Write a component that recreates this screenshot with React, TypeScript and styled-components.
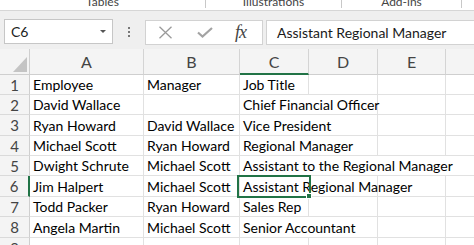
import styled, { createGlobalStyle } from "styled-components";

const GlobalStyle = createGlobalStyle`
    body {
        margin: 0;
        background: #ffffff;
        overflow: hidden;
    }
`

const green = "#217346";
const cellFont = `"Lato", "Liberation Sans", sans-serif`;

const Page = styled.div`
    width: 474px;
    height: 245px;
    overflow: hidden;
    display: flex;
    flex-direction: column;
    font-family: ${cellFont};
`

const Ribbon = styled.div`
    flex-shrink: 0;
    height: 10px;
    display: flex;
    border-bottom: 1px solid #d6d6d6;
    overflow: hidden;
    background: #ffffff;
`

const RibbonGroup = styled.div<{ $width: number }>`
    flex: 0 0 ${p => p.$width}px;
    height: 8px;
    box-sizing: border-box;
    border-right: 1px solid #c8c8c8;
    text-align: center;
    font-size: 12px;
    line-height: 12px;
    color: #444444;
    white-space: nowrap;
    overflow: hidden;

    span {
        display: block;
        margin-top: -4px;
    }
`

const FormulaBar = styled.div`
    flex-shrink: 0;
    height: 38px;
    display: flex;
    align-items: flex-start;
    padding: 8px 0 0 4px;
    box-sizing: border-box;
    background: #efefef;
`

const NameBox = styled.div`
    width: 109px;
    height: 25px;
    box-sizing: border-box;
    border: 1px solid #c6c6c6;
    background: #ffffff;
    display: flex;
    align-items: center;
    justify-content: space-between;
    padding: 0 6px;
    font-size: 14px;
    color: #222222;
`

const DropArrow = styled.div`
    width: 0;
    height: 0;
    border-left: 3px solid transparent;
    border-right: 3px solid transparent;
    border-top: 3px solid #555555;
`

const Grip = styled.div`
    width: 32px;
    height: 25px;
    display: flex;
    flex-direction: column;
    align-items: center;
    justify-content: center;
    gap: 2px;

    i {
        width: 2px;
        height: 2px;
        background: #777777;
    }
`

const FxBox = styled.div`
    width: 118px;
    height: 25px;
    margin-top: 1px;
    box-sizing: border-box;
    border: 1px solid #d2d2d2;
    background: #ffffff;
    display: flex;
    align-items: center;
    padding-left: 12px;
`

const IconSlot = styled.div<{ $width: number }>`
    flex: 0 0 ${p => p.$width}px;
    display: flex;
    align-items: center;
`

const Fx = styled.span`
    font-family: "Liberation Serif", serif;
    font-style: italic;
    font-size: 18px;
    color: #444444;
    letter-spacing: -1px;
`

const FormulaInput = styled.div`
    flex: 1;
    height: 25px;
    margin: 1px 0 0 3px;
    box-sizing: border-box;
    border: 1px solid #d2d2d2;
    border-right: none;
    background: #ffffff;
    display: flex;
    align-items: center;
    padding-left: 10px;
    font-size: 14px;
    color: #1a1a1a;
    white-space: nowrap;
`

const Sheet = styled.div`
    flex: 1;
    min-height: 0;
    display: grid;
    grid-template-columns: 30px 114px 96px 69px 69px 68px 69px;
    grid-template-rows: 26px 20px 20px 21px 20px 20px 21px 20px 21px 20px;
    background: #ffffff;
`

const Corner = styled.div`
    background: #f4f4f4;
    border-right: 1px solid #cfcfcf;
    border-bottom: 1px solid #cfcfcf;
    display: flex;
    align-items: flex-end;
    justify-content: flex-end;
    padding: 0 2px 2px 0;
`

const ColHeader = styled.div<{ $active?: boolean }>`
    background: #f4f4f4;
    border-right: 1px solid #d4d4d4;
    border-bottom: ${p => p.$active ? `2px solid ${green}` : "1px solid #cfcfcf"};
    display: flex;
    align-items: center;
    justify-content: center;
    font-size: 16px;
    color: #444444;
    padding-top: ${p => p.$active ? 1 : 0}px;
`

const RowHeader = styled.div<{ $active?: boolean, $row: number }>`
    grid-column: 1;
    grid-row: ${p => p.$row};
    background: #f4f4f4;
    border-right: ${p => p.$active ? `2px solid ${green}` : "1px solid #cfcfcf"};
    border-bottom: 1px solid #dadada;
    display: flex;
    align-items: center;
    justify-content: center;
    font-size: 15px;
    color: #444444;
`

const Cell = styled.div<{ $col: number, $row: number, $span: number }>`
    grid-column: ${p => p.$col} / span ${p => p.$span};
    grid-row: ${p => p.$row};
    border-right: 1px solid #e1e1e1;
    border-bottom: 1px solid #e1e1e1;
    padding: 0 0 0 3px;
    display: flex;
    align-items: center;
    font-size: 14px;
    color: #000000;
    white-space: nowrap;
    overflow: visible;
`

const Selection = styled.div<{ $col: number, $row: number }>`
    grid-column: ${p => p.$col};
    grid-row: ${p => p.$row};
    margin: -1px -2px -1px -3px;
    border: 2px solid ${green};
    position: relative;
    pointer-events: none;
`

const FillHandle = styled.div`
    position: absolute;
    right: -3px;
    bottom: -3px;
    width: 4px;
    height: 4px;
    background: ${green};
    border: 1px solid #ffffff;
`

const CrossIcon = () => (
    <svg width="15" height="13" viewBox="0 0 15 13">
        <path d="M1.5 0.8 L13.5 12.2 M13.5 0.8 L1.5 12.2" stroke="#9a9a9a" strokeWidth="1.3" fill="none"/>
    </svg>
);

const CheckIcon = () => (
    <svg width="16" height="11" viewBox="0 0 16 11">
        <path d="M1 5.5 L5.5 9.5 L15 1" stroke="#a3a3a3" strokeWidth="2.2" fill="none"/>
    </svg>
);

const CornerTriangle = () => (
    <svg width="14" height="15" viewBox="0 0 14 15">
        <polygon points="14,0 14,15 0,15" fill="#c4c4c4"/>
    </svg>
);

type CellData = [string, number?];

const columns = ["A", "B", "C", "D", "E", "F"];

const rows: CellData[][] = [
    [["Employee"], ["Manager"], ["Job Title"], [""], [""], [""]],
    [["David Wallace"], [""], ["Chief Financial Officer", 2], [""], [""]],
    [["Ryan Howard"], ["David Wallace"], ["Vice President", 2], [""], [""]],
    [["Michael Scott"], ["Ryan Howard"], ["Regional Manager", 2], [""], [""]],
    [["Dwight Schrute"], ["Michael Scott"], ["Assistant to the Regional Manager", 4]],
    [["Jim Halpert"], ["Michael Scott"], ["Assistant Regional Manager", 2], [""], [""]],
    [["Todd Packer"], ["Ryan Howard"], ["Sales Rep"], [""], [""], [""]],
    [["Angela Martin"], ["Michael Scott"], ["Senior Accountant", 2], [""], [""]],
    [[""], [""], [""], [""], [""], [""]],
];

const ribbonGroups = [
    {label: "Tables", width: 206},
    {label: "Illustrations", width: 136},
    {label: "Add-ins", width: 120},
    {label: "", width: 60},
];

const activeRow = 6;
const activeCol = "C";

const App = () => {
    return (
        <Page>
            <GlobalStyle/>
            <Ribbon>
                {ribbonGroups.map(g => (
                    <RibbonGroup key={g.width} $width={g.width}><span>{g.label}</span></RibbonGroup>
                ))}
            </Ribbon>

            <FormulaBar>
                <NameBox>
                    <span>C6</span>
                    <DropArrow/>
                </NameBox>
                <Grip><i/><i/><i/></Grip>
                <FxBox>
                    <IconSlot $width={39}><CrossIcon/></IconSlot>
                    <IconSlot $width={38}><CheckIcon/></IconSlot>
                    <IconSlot $width={20}><Fx>fx</Fx></IconSlot>
                </FxBox>
                <FormulaInput>Assistant Regional Manager</FormulaInput>
            </FormulaBar>

            <Sheet>
                <Corner><CornerTriangle/></Corner>
                {columns.map(c => (
                    <ColHeader key={c} $active={c === activeCol}>{c}</ColHeader>
                ))}
                {rows.map((row, r) => {
                    let col = 2;
                    return [
                        <RowHeader key={`h${r}`} $row={r + 2} $active={r + 1 === activeRow}>{r + 1}</RowHeader>,
                        ...row.map(([text, span = 1], c) => {
                            const cell = (
                                <Cell key={`${r}-${c}`} $col={col} $row={r + 2} $span={span}>{text}</Cell>
                            );
                            col += span;
                            return cell;
                        }),
                    ];
                })}
                <Selection $col={4} $row={activeRow + 1}>
                    <FillHandle/>
                </Selection>
            </Sheet>
        </Page>
    );
};

export default App;
